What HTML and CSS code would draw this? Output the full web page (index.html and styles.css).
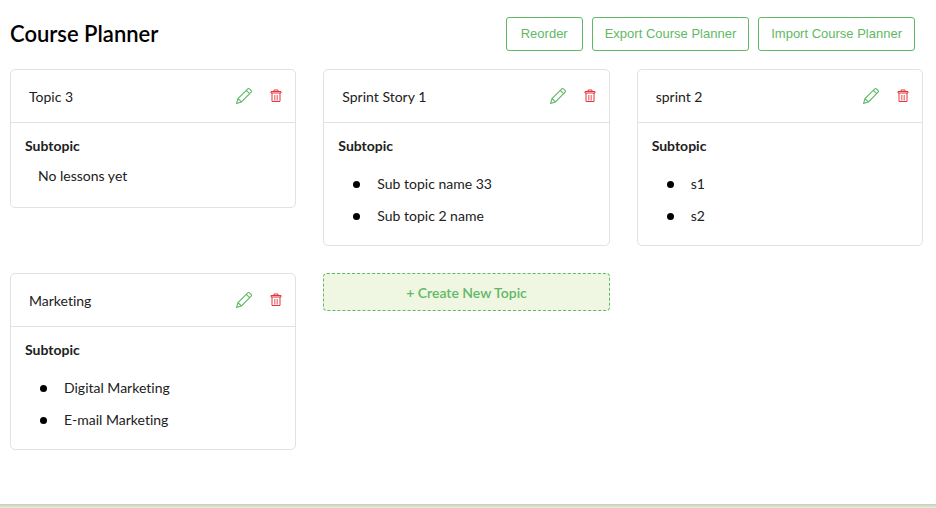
FILE: index.html
```html
<!DOCTYPE html>
<html lang="en">
<head>
<meta charset="utf-8">
<title>Course Planner</title>
<link rel="stylesheet" href="styles.css">
</head>
<body>
<svg class="sprite" aria-hidden="true">
  <symbol id="pencil" viewBox="0 0 16 16">
    <path d="M.6 15.4 2 10.600 11.800.9Q12.600.2 13.500.9L15.100 2.500Q15.800 3.300 15.100 4.200L5.400 14ZM2 10.600 5.400 14M10.300 2.400 13.600 5.700" fill="none" stroke="currentColor" stroke-width="1.1"/>
  </symbol>
  <symbol id="trash" viewBox="0 0 12 14">
    <path d="M4 2V1H8V2M1 2.500H11V4H1ZM2 4V12.500H10V4" fill="none" stroke="currentColor"/>
    <path d="M4.500 6V11.500M6 6V11.500M7.500 6V11.500" fill="none" stroke="currentColor" stroke-width=".6"/>
  </symbol>
</svg>
<main class="planner">
  <header class="toolbar">
    <h1>Course Planner</h1>
    <div class="actions">
      <button type="button" class="btn">Reorder</button>
      <button type="button" class="btn">Export Course Planner</button>
      <button type="button" class="btn">Import Course Planner</button>
    </div>
  </header>
  <div class="topics">
    <section class="card">
      <div class="card-head">
        <h2>Topic 3</h2>
        <button type="button" class="icon edit" aria-label="Edit"><svg><use href="#pencil"/></svg></button>
        <button type="button" class="icon delete" aria-label="Delete"><svg><use href="#trash"/></svg></button>
      </div>
      <div class="card-body">
        <h3>Subtopic</h3>
        <p class="empty">No lessons yet</p>
      </div>
    </section>
    <section class="card">
      <div class="card-head">
        <h2>Sprint Story 1</h2>
        <button type="button" class="icon edit" aria-label="Edit"><svg><use href="#pencil"/></svg></button>
        <button type="button" class="icon delete" aria-label="Delete"><svg><use href="#trash"/></svg></button>
      </div>
      <div class="card-body">
        <h3>Subtopic</h3>
        <ul>
          <li>Sub topic name 33</li>
          <li>Sub topic 2 name</li>
        </ul>
      </div>
    </section>
    <section class="card">
      <div class="card-head">
        <h2>sprint 2</h2>
        <button type="button" class="icon edit" aria-label="Edit"><svg><use href="#pencil"/></svg></button>
        <button type="button" class="icon delete" aria-label="Delete"><svg><use href="#trash"/></svg></button>
      </div>
      <div class="card-body">
        <h3>Subtopic</h3>
        <ul>
          <li>s1</li>
          <li>s2</li>
        </ul>
      </div>
    </section>
    <section class="card">
      <div class="card-head">
        <h2>Marketing</h2>
        <button type="button" class="icon edit" aria-label="Edit"><svg><use href="#pencil"/></svg></button>
        <button type="button" class="icon delete" aria-label="Delete"><svg><use href="#trash"/></svg></button>
      </div>
      <div class="card-body">
        <h3>Subtopic</h3>
        <ul>
          <li>Digital Marketing</li>
          <li>E-mail Marketing</li>
        </ul>
      </div>
    </section>
    <button type="button" class="create">+ Create New Topic</button>
  </div>
</main>
<footer class="footer"></footer>
</body>
</html>
```
FILE: styles.css
```css
* {
  box-sizing: border-box;
}

body {
  display: flex;
  flex-direction: column;
  min-height: 100vh;
  margin: 0;
  background: #fff;
  color: #212121;
  font: 14px/20px Lato, sans-serif;
  font-variant-ligatures: none;
}

h1, h2, h3, p, ul {
  margin: 0;
  padding: 0;
}

.sprite {
  display: none;
}

.planner {
  flex: 1;
  padding: 17px 13px 24px 10px;
}

.toolbar {
  display: flex;
  align-items: center;
  justify-content: space-between;
  margin-bottom: 18px;
  padding-right: 8px;
}

h1 {
  color: #000;
  font-size: 22px;
  font-weight: 600;
  line-height: 34px;
}

.actions {
  display: flex;
  gap: 9px;
}

.btn {
  height: 34px;
  padding: 0 12px 1px;
  border: 1px solid #5fb965;
  border-radius: 3px;
  background: #fff;
  color: #5fb965;
  font: 13px/20px "Liberation Sans", Arial, sans-serif;
}

.btn:first-child {
  min-width: 77px;
}

.topics {
  display: grid;
  grid-template-columns: repeat(3, minmax(0, 1fr));
  align-items: start;
  gap: 27px;
}

.card {
  border: 1px solid #e2e2e2;
  border-radius: 5px;
}

.card-head {
  display: flex;
  align-items: center;
  height: 53px;
  padding: 0 13px 0 18px;
  border-bottom: 1px solid #e2e2e2;
}

h2 {
  flex: 1;
  padding-top: 1px;
  font-size: 14px;
  font-weight: 400;
}

.icon {
  display: flex;
  padding: 0;
  border: 0;
  background: none;
}

.edit {
  margin-right: 18px;
  color: #5fb965;
}

.edit svg {
  width: 16px;
  height: 16px;
}

.delete {
  color: #e5353a;
}

.delete svg {
  width: 12px;
  height: 14px;
}

.card-body {
  padding: 13px 14px;
}

h3 {
  font-size: 14px;
  font-weight: 700;
}

.empty {
  padding: 10px 13px 8px;
}

ul {
  padding-top: 12px;
  list-style: none;
}

li {
  display: flex;
  align-items: center;
  gap: 17px;
  padding-left: 15px;
  line-height: 32px;
}

li::before {
  width: 7px;
  height: 7px;
  border-radius: 50%;
  background: #000;
  content: "";
}

.create {
  height: 38px;
  padding-top: 3px;
  border: 1px dashed #5fb965;
  border-radius: 4px;
  background: #eff7e2;
  color: #5fb965;
  font: 600 14px/20px Lato, sans-serif;
}

.footer {
  height: 4px;
  background: linear-gradient(#c8cdb9, #e6eedb);
}
```
